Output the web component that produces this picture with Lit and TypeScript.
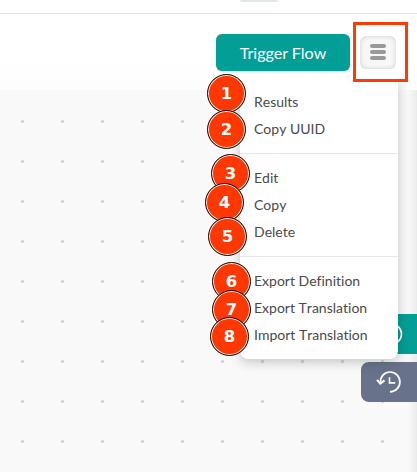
import { LitElement, html, css, svg } from "lit";
import { customElement } from "lit/decorators.js";
import { styleMap } from "lit/directives/style-map.js";

const groups = [
  ["Results", "Copy UUID"],
  ["Edit", "Copy", "Delete"],
  ["Export Definition", "Export Translation", "Import Translation"],
];

// Centre of each numbered marker
const markers = [
  [226.5, 93], [226.5, 129.5], [230.5, 173], [224.5, 202],
  [227.5, 236], [231.5, 281], [231.5, 309.5], [229.5, 336.5],
];

@customElement("app-root")
export class AppRoot extends LitElement {
  static styles = css`
    :host {
      display: block;
      position: relative;
      width: 417px;
      height: 472px;
      overflow: hidden;
      background: #f9f9f9;
      font-family: Lato, "Liberation Sans", sans-serif;
      color: #4a4a4a;
    }
    .page { display: flex; flex-direction: column; height: 100%; }
    .top {
      box-sizing: border-box;
      height: 14px;
      border-bottom: 1px solid #e2e3e5;
      background: #fff;
      padding-left: 240px;
    }
    .handle { width: 38px; height: 2px; background: #e1e5ec; border-radius: 0 0 4px 4px; }
    .toolbar {
      box-sizing: border-box;
      height: 76px;
      padding: 20px 21px 0 0;
      display: flex;
      justify-content: flex-end;
      align-items: flex-start;
      gap: 10px;
      background: linear-gradient(#fff 50%, #fdfdfd);
    }
    .trigger {
      width: 134px;
      height: 37px;
      border: 0;
      padding: 0 0 0 0;
      border-radius: 6px;
      background: #039e96;
      color: #fff;
      font: 16.1px/37px Lato, sans-serif;
      text-align: center;
      box-shadow: 0 1px 2px rgba(0, 0, 0, 0.15);
    }
    .burger {
      box-sizing: border-box;
      width: 36px;
      height: 33px;
      margin-top: 2px;
      border: 0;
      border-radius: 6px;
      padding: 8px 10px;
      background: #f7f7f7;
      box-shadow: inset 0 0 5px rgba(0, 0, 0, 0.16);
      display: flex;
      flex-direction: column;
      gap: 2px;
    }
    .bar { width: 16px; height: 4px; border-radius: 2px; background: #999; }
    .canvas {
      flex: 1;
      background: radial-gradient(circle at 20.5px 20.5px, #d2d2da 1px, rgba(210, 210, 218, 0) 2.2px) 2px 11px / 40px 40px;
    }
    .edge {
      position: absolute;
      right: 0;
      top: 90px;
      bottom: 0;
      width: 9px;
      background: linear-gradient(to right, rgba(0, 0, 0, 0), rgba(0, 0, 0, 0.06));
    }
    .side {
      position: absolute;
      right: 0;
      top: 314px;
      display: flex;
      flex-direction: column;
      gap: 8px;
    }
    .tab { width: 56px; height: 40px; border-radius: 8px 0 0 8px; background: #68738b; }
    .tab.teal { background: #039e96; }
    .tab svg { display: block; }
    .menu {
      position: absolute;
      left: 240px;
      top: 78px;
      box-sizing: border-box;
      width: 158px;
      height: 281px;
      background: #fff;
      border-radius: 0 0 8px 8px;
      box-shadow: 0 3px 12px rgba(0, 0, 0, 0.22);
      clip-path: inset(0 -20px -20px -20px);
      padding-top: 10px;
    }
    .group { padding: 0 0 11px 14px; }
    .group + .group { border-top: 1px solid #e6e6e6; padding-top: 10px; }
    .item {
      height: 27px;
      font-size: 14px;
      line-height: 27px;
      white-space: nowrap;
      font-variant-ligatures: none;
      font-kerning: none;
    }
    .highlight {
      position: absolute;
      left: 353px;
      top: 22px;
      box-sizing: border-box;
      width: 55px;
      height: 60px;
      border: 3px solid #ff3a05;
    }
    .marker {
      position: absolute;
      box-sizing: border-box;
      width: 39px;
      height: 39px;
      border: 1.4px solid #111;
      border-radius: 50%;
      background: #ff3700;
      box-shadow: inset 0 0 0 1px #ffe6df;
      color: #fff;
      font: bold 16.5px/38px "DejaVu Sans", sans-serif;
      text-align: center;
    }
  `;

  private clock(history: boolean) {
    return html`<svg width="56" height="40" viewBox="0 0 56 40" fill="none" stroke="#fff" stroke-width="1.7">
      ${history
        ? svg`<path d="M19.4 20.5C19.4 14 23.6 10 29 10a9.9 9.9 0 0 1 0 19.8"/>
              <path d="M28.5 15.2v5.7h5.7" stroke-width="1.6"/>
              <path d="M16 17.8l3.3 3.8 4.2-3.2" stroke-width="2"/>`
        : svg`<circle cx="30.5" cy="20" r="10"/>`}
    </svg>`;
  }

  render() {
    return html`
      <div class="page">
        <div class="top"><div class="handle"></div></div>
        <div class="toolbar">
          <button class="trigger">Trigger Flow</button>
          <button class="burger" aria-label="Menu">
            <span class="bar"></span><span class="bar"></span><span class="bar"></span>
          </button>
        </div>
        <div class="canvas"></div>
      </div>
      <div class="edge"></div>
      <div class="side">
        <div class="tab teal">${this.clock(false)}</div>
        <div class="tab">${this.clock(true)}</div>
      </div>
      <div class="menu">
        ${groups.map((g) => html`<div class="group">${g.map((t) => html`<div class="item">${t}</div>`)}</div>`)}
      </div>
      <div class="highlight"></div>
      ${markers.map(([x, y], i) => html`
        <div class="marker" style=${styleMap({ left: `${x - 19.5}px`, top: `${y - 19.5}px` })}>${i + 1}</div>`)}
    `;
  }
}
